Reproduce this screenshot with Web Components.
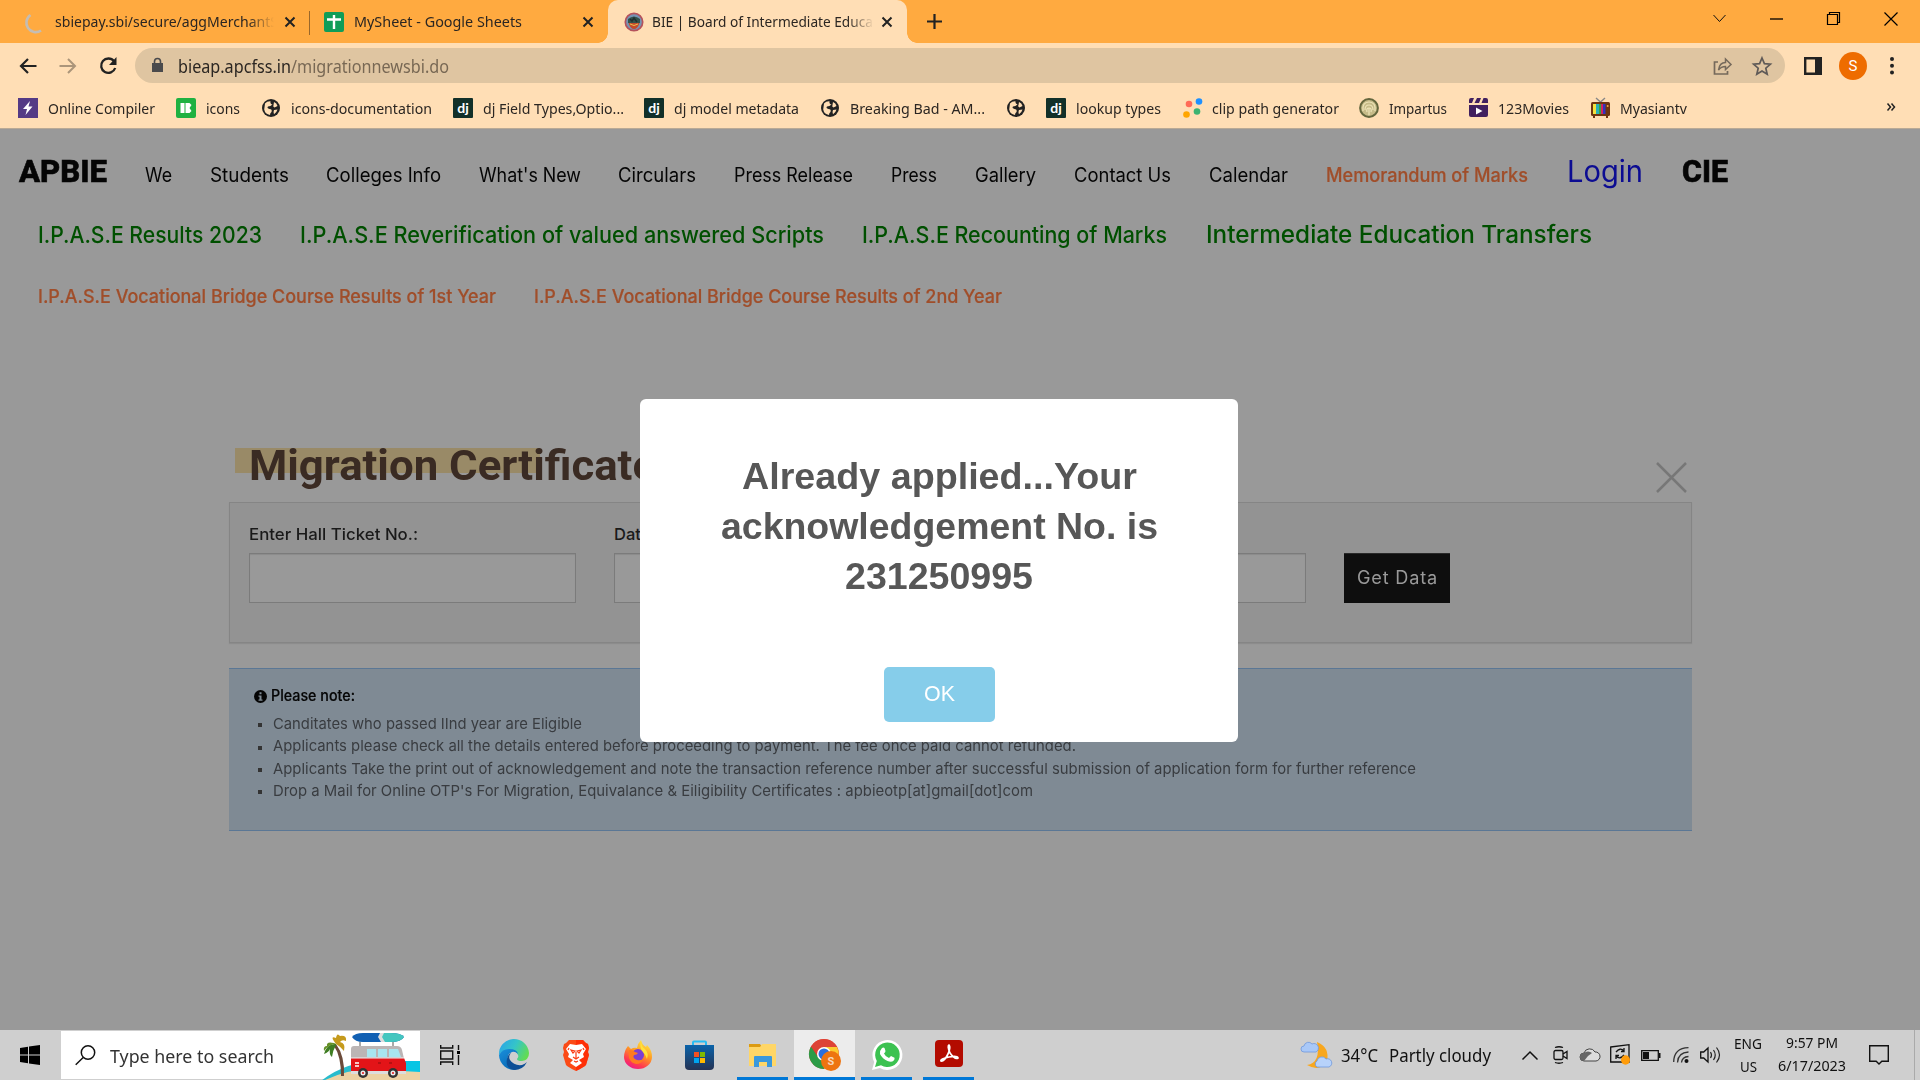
<!DOCTYPE html>
<html lang="en">
<head>
<meta charset="utf-8">
<title>BIE | Board of Intermediate Education</title>
<style>
html,body{margin:0;padding:0}
body{width:1920px;height:1080px;overflow:hidden;background:#999;font-family:"Noto Sans",sans-serif}
</style>
</head>
<body>
<desktop-screen></desktop-screen>
<script>
// Registers a custom element whose shadow root holds the given styles and markup.
const define = (name, css, html) => customElements.define(name, class extends HTMLElement {
  constructor() {
    super();
    const t = document.createElement('template');
    t.innerHTML = `<style>:host{display:block;box-sizing:border-box}svg{display:block;overflow:visible}.row{display:flex;height:100%}.row>div{flex:none;display:flex;align-items:center}${css}</style>${html}`;
    this.attachShadow({mode: 'open'}).appendChild(t.content.cloneNode(true));
  }
});

// A single line of text condensed or widened to a given width.
customElements.define('fit-text', class extends HTMLElement {
  constructor() {
    super();
    this.attachShadow({mode: 'open'}).innerHTML = '<style>:host{display:block;flex:none;white-space:nowrap}span{display:inline-block;transform-origin:0 50%}</style><span><slot></slot></span>';
  }
  connectedCallback() {
    const w = +this.getAttribute('w'), s = this.shadowRoot.querySelector('span');
    this.style.width = w + 'px';
    const n = s.getBoundingClientRect().width;
    if (n) s.style.transform = `scaleX(${w / n})`;
  }
});

// Lays items [x, width, markup, dy] along one flex row.
const row = items => {
  let p = 0;
  return '<div class="row">' + items.map(([x, w, h, dy]) => {
    const m = x - p; p = x + w;
    return `<div style="margin-left:${m}px;width:${w}px;${dy ? `margin-top:${dy}px;margin-bottom:${-dy}px` : ''}">${h}</div>`;
  }).join('') + '</div>';
};
const T = (x, w, text, cls = '', dy = 0) => [x, w, `<fit-text w="${w}" class="${cls}">${text}</fit-text>`, dy];
const I = (x, w, h, inner, dy = 0, vb) => [x, w, `<svg width="${w}" height="${h}" viewBox="${vb || `0 0 ${w} ${h}`}" fill="none">${inner}</svg>`, dy];

/* ---------- tab strip ---------- */
const X = '<path d="M1.5 1.5l9 9M10.5 1.5l-9 9" stroke="#222" stroke-width="2"/>';
define('tab-strip', `:host{height:43px;background:#ffaa40;font-size:15px;color:#2b2622}
.clip{overflow:hidden;width:219px;-webkit-mask:linear-gradient(90deg,#000 88%,transparent);mask:linear-gradient(90deg,#000 88%,transparent)}
.tab{position:relative;background:#ffdeb5;border-radius:10px 10px 0 0;height:43px;width:299px}
.tab:before,.tab:after{content:"";position:absolute;bottom:0;width:10px;height:10px}
.tab:before{left:-10px;background:radial-gradient(circle at 0 0,transparent 9.5px,#ffdeb5 10px)}
.tab:after{right:-10px;background:radial-gradient(circle at 100% 0,transparent 9.5px,#ffdeb5 10px)}`,
row([
 I(25,18,20,'<path d="M5.500 2A9 9 0 0 0 16 17.500" stroke="#c4bdb4" stroke-width="2.600"/>',1),
 [55,219,'<div class="clip"><fit-text w="223">sbiepay.sbi/secure/aggMerchantS</fit-text></div>',-1],
 I(284,12,12,X),
 I(309,1,24,'<path d="M.5 0v24" stroke="#99672a"/>',1),
 I(324,20,20,'<rect width="20" height="20" rx="2" fill="#0f9d58"/><path d="M10 3v14M3 7.500h14" stroke="#fff" stroke-width="2.400"/>',0),
 T(354,168,'MySheet - Google Sheets','',-1),
 I(582,12,12,X),
 [608,299,'<div class="tab">'+row([
   I(16,20,20,'<circle cx="10" cy="10" r="8.700" fill="#7694b4" stroke="#b4525c" stroke-width="1.700"/><path d="M4 7q6-5 12 0v4H4z" fill="#33524b"/><path d="M4.500 11h11q-2 6-5.500 6t-5.500-6z" fill="#c24a2c"/><path d="M6 12q4 3 8 0" stroke="#edc14c"/><path d="M6 7l2 2 2-3 3 4" stroke="#1f3031" stroke-width="1.500"/>'),
   [44,222,'<div class="clip" style="width:222px"><fit-text w="221">BIE | Board of Intermediate Educa</fit-text></div>',-1],
   I(273,12,12,X)
 ])+'</div>'],
 I(927,15,15,'<path d="M7.500 0v15M0 7.500h15" stroke="#222" stroke-width="2.200"/>'),
 I(1713,13,9,'<path d="M.5 1l6 6.500 6-6.500" stroke="#111" stroke-width="1"/>',-3),
 I(1770,13,2,'<path d="M0 1h13" stroke="#000" stroke-width="1.300"/>',-3),
 I(1827,13,13,'<path d="M.5 2.500h10v10H.5zM2.500 2.500v-2h10v10h-2" stroke="#000" stroke-width="1.200"/>',-3),
 I(1884,14,14,'<path d="M.5.5l13 13M13.500.5l-13 13" stroke="#000" stroke-width="1.200"/>',-3)
]));

/* ---------- address bar ---------- */
define('address-bar', `:host{height:45px;background:#ffdeb5;padding:0}
.omni{background:#dfc5a1;border-radius:18px;height:35px;width:1650px}
.url{font-size:18px;color:#786854}.url b{font-weight:400;color:#2b2622}
.av{width:28px;height:28px;border-radius:50%;background:#ee6c00;color:#fff;font:15px/28px Roboto,sans-serif;text-align:center}`,
row([
 I(19,18,16,'<path d="M17.500 8H2M9 1L2 8l7 7" stroke="#222" stroke-width="2.200"/>'),
 I(59,18,16,'<path d="M.5 8H16M9 1l7 7-7 7" stroke="#ab957a" stroke-width="2"/>'),
 I(99,18,18,'<path d="M15 4.200A7.200 7.200 0 1 0 16.200 11" stroke="#222" stroke-width="2.300"/><path d="M17.500 0v8H10z" fill="#222"/>'),
 [135,1650,'<div class="omni">'+row([
   I(17,11,14,'<path d="M0 5h11v9H0z" fill="#4a4a4c"/><path d="M2.500 5V3.500a3 3 0 0 1 6 0V5" stroke="#4a4a4c" stroke-width="1.600"/>',-1),
   T(43,271,'<b>bieap.apcfss.in</b>/migrationnewsbi.do','url'),
   I(1578,19,18,'<path d="M5 5H1.500v12h13v-3" stroke="#75695b" stroke-width="1.700"/><path d="M5.500 13q1-7.500 7-7.500V2l5.500 5.500-5.500 5V9.500q-4.500 0-7 3.500z" stroke="#75695b" stroke-width="1.500"/>',0),
   I(1618,18,18,'<path d="M9 1l2.400 5.700 6 .5-4.600 4 1.400 6L9 14l-5.200 3.200 1.400-6-4.600-4 6-.5z" stroke="#5f5a57" stroke-width="1.700"/>')
 ])+'</div>'],
 I(1804,18,18,'<path d="M1.200 1.200h15.600v15.600H1.200z" stroke="#222" stroke-width="2.400"/><path d="M11 1h6v16h-6z" fill="#222"/>'),
 [1839,28,'<div class="av">S</div>'],
 I(1890,4,18,'<circle cx="2" cy="2" r="2" fill="#222"/><circle cx="2" cy="8.700" r="2" fill="#222"/><circle cx="2" cy="15.500" r="2" fill="#222"/>')
]));

/* ---------- bookmarks ---------- */
const dj = x => I(x,20,20,'<rect width="20" height="20" rx="1" fill="#123029"/><text x="10" y="14.500" text-anchor="middle" font-family="Lato,sans-serif" font-weight="700" font-size="14" fill="#fff">dj</text>');
const globe = x => I(x,18,18,'<circle cx="9" cy="9" r="9" fill="#222"/><path d="M3 4.500Q5 2 8.500 2.200 8 5 10.500 5.500 8.500 7.500 6 7.500 4.500 9 7.500 10q3 0 2 3-1.500 1-1.500 3Q3 15 2.200 10.500zM12 3q2.800 1.200 3.500 4l-3 1.500q-2-1-1-2.500zM12 11l3.500-.5q-1 3.500-3.500 4.700-1-2 0-4.200z" fill="#ffdeb5"/>');
define('bookmarks-bar', `:host{height:41px;background:#ffdeb5;border-bottom:1px solid #b9aa96;font-size:15px;color:#2b2622}`,
row([
 I(18,20,20,'<rect width="20" height="20" fill="#543a85"/><path d="M12 3l-7 8h4l-1.500 6 7-8.500h-4z" fill="#fff"/>'),
 T(48,107,'Online Compiler'),
 I(176,20,20,'<rect width="20" height="20" rx="2" fill="#1fb141"/><path d="M4.500 5h4v10h-4zM9.500 5h4l2 2-2 3 2 3-2 2h-4z" fill="#fff"/>'),
 T(206,34,'icons'), globe(262), T(291,141,'icons-documentation'),
 dj(453), T(483,141,'dj Field Types,Optio...'),
 dj(644), T(674,125,'dj model metadata'),
 globe(821), T(850,135,'Breaking Bad - AM...'), globe(1007),
 dj(1046), T(1076,85,'lookup types'),
 I(1183,20,20,'<circle cx="6" cy="6" r="3.300" fill="#ff6b57"/><circle cx="16" cy="3.500" r="3.300" fill="#1e90ff"/><circle cx="14" cy="13.500" r="3.300" fill="#3cb371"/><circle cx="3.500" cy="16.500" r="3.300" fill="#ffa500"/>'),
 T(1212,127,'clip path generator'),
 I(1359,20,20,'<circle cx="10" cy="10" r="8.900" fill="#c6bb88" stroke="#64663d" stroke-width="2"/><path d="M10 17v-7M4 13q-1-9 6-9t6 9M6 12q0-5 4-5t4 5M8 14q-1-4 2-4t2 4" stroke="#eee4b8" stroke-width="1.200"/>'),
 T(1389,58,'Impartus'),
 I(1469,20,20,'<path d="M0 7h19v10q0 2-2 2H2q-2 0-2-2z" fill="#41205f"/><path d="M2 0h3L3 5H0V2q0-2 2-2zM8 0h4l-2 5H5.500zM14.500 0H17q2 0 2 2v3h-6.500z" fill="#41205f"/><path d="M7 9.500v7l6.500-3.500z" fill="#fff"/>'),
 T(1498,71,'123Movies'),
 I(1591,19,20,'<path d="M5 0l4.500 4L14 0" stroke="#888" stroke-width="1.400"/><rect y="4" width="19" height="14" rx="1.500" fill="#6e3510"/><path d="M2 6h3v10H2z" fill="#f3e33d"/><path d="M5 6h3v10H5z" fill="#29b0b8"/><path d="M8 6h2v10H8z" fill="#38a33e"/><path d="M10 6h2v10h-2z" fill="#d3245e"/><path d="M12 6h2.500v10H12z" fill="#3333bd"/><path d="M3 18v2M16 18v2" stroke="#6e3510" stroke-width="2"/><circle cx="16.700" cy="8" r="1" fill="#eda24f"/>'),
 T(1620,67,'Myasiantv'),
 I(1887,8,8,'<path d="M.5.5L3.500 4 .5 7.500M4.500.5L7.500 4l-3 3.500" stroke="#222" stroke-width="1.500"/>',-1)
]));

/* ---------- site navigation ---------- */
define('site-nav', `:host{font-family:Inter,sans-serif;color:#050505;padding-top:19px}
.l{height:46px}.l .row>div{align-items:baseline}.l .row{align-items:baseline}
.l2{margin-top:17px;height:46px;color:#005000}.l3{margin-top:17px;height:46px;color:#a04e2a}
fit-text{font-size:19.500px;line-height:46px}
.brand{font:800 31px/46px Roboto,Inter,sans-serif;-webkit-text-stroke:.6px #050505}
.login{font-size:30px;color:#0c0c92}
.mem{font-weight:500;color:#a04e2a;-webkit-text-stroke:.2px}
.g{font-size:23px;font-weight:500}.g2{font-size:24.500px;font-weight:500}.o{font-size:18.700px;font-weight:500;-webkit-text-stroke:.2px}`,
'<div class="l">'+row([
 T(19,88,'APBIE','brand'),T(145,27,'We'),T(210,79,'Students'),T(326,115,'Colleges Info'),T(479,102,"What's New"),T(618,78,'Circulars'),T(734,119,'Press Release'),
 T(891,46,'Press'),T(975,61,'Gallery'),T(1074,97,'Contact Us'),T(1209,79,'Calendar'),T(1326,202,'Memorandum of Marks','mem'),T(1567,76,'Login','login'),T(1682,46,'CIE','brand')
])+'</div><div class="l l2">'+row([
 T(38,224,'I.P.A.S.E Results 2023','g'),T(300,524,'I.P.A.S.E Reverification of valued answered Scripts','g'),T(862,305,'I.P.A.S.E Recounting of Marks','g'),T(1206,386,'Intermediate Education Transfers','g2')
])+'</div><div class="l l3">'+row([
 T(38,458,'I.P.A.S.E Vocational Bridge Course Results of 1st Year','o'),T(534,468,'I.P.A.S.E Vocational Bridge Course Results of 2nd Year','o')
])+'</div>');

/* ---------- migration form ---------- */
define('text-field', `:host{width:327px;font:500 16.500px/24px Inter,sans-serif;color:#1a1a1a}
.box{box-sizing:border-box;height:50px;margin-top:7px;border:1px solid #7b7b7b;background:#999;box-shadow:inset 0 1px 1px #8b8b8b}
label{display:block;height:24px;white-space:nowrap}`,
'<label><slot></slot></label><div class="box"></div>');
define('migration-form', `:host{margin:0 228px 0 229px}
header{display:flex;justify-content:space-between;height:62px}
.t{background:linear-gradient(#998a67,#998a67) 0 8px/305px 25px no-repeat;margin-left:6px;padding-left:14px;font:700 43px/50px Roboto,sans-serif;color:#3a2b23;height:62px}
.x{margin:22px 5px 0 0}
.panel{box-sizing:border-box;height:141px;border:1px solid #858585;background:#939393;padding:19px 19px 0;display:flex;gap:38px;box-shadow:0 1px 1px #8c8c8c}
button{box-sizing:border-box;margin:31px 0 0;padding:0;width:106px;height:50px;border:0;border-top:1px solid #292929;background:#0e0e0e;color:#999;font:400 18px/48px Inter,sans-serif;display:flex;justify-content:center;letter-spacing:.8px}`,
`<header><div class="t"><fit-text w="407">Migration Certificate</fit-text></div><svg class="x" width="31" height="31"><path d="M1 1l29 29M30 1L1 30" stroke="#777" stroke-width="2.500"/></svg></header>
<div class="panel"><text-field><fit-text w="169">Enter Hall Ticket No.:</fit-text></text-field><text-field>Date of Birth:</text-field><text-field></text-field><button><fit-text w="81">Get Data</fit-text></button></div>`);

/* ---------- notice ---------- */
define('notice-box', `:host{margin:25px 228px 0 229px;height:163px;background:#7f8a94;border:solid #5b7795;border-width:1px 0;padding:15px 0 0 25px;font:15px/22.400px Inter,sans-serif;color:#393c40}
header{display:flex;gap:4px;align-items:center;color:#050505;font-weight:500;font-size:15.500px;height:24px;margin-bottom:5px;-webkit-text-stroke:.2px}
ul{margin:0;padding:0;list-style:none}li{display:flex;align-items:center;height:22.400px}li:before{content:"";width:4px;height:4px;background:#333;margin:2px 11px 0 4px}`,
`<header><svg width="13" height="13"><circle cx="6.500" cy="6.500" r="6.500" fill="#050505"/><path d="M5.500 2.300h2v2h-2zM4.500 5.500h3v4h1v1.300h-4V9.500h1V6.700h-1z" fill="#7f8a94"/></svg><fit-text w="84">Please note:</fit-text></header>
<ul><li><fit-text w="309">Canditates who passed IInd year are Eligible</fit-text></li>
<li><fit-text w="803">Applicants please check all the details entered before proceeding to payment. The fee once paid cannot refunded.</fit-text></li>
<li><fit-text w="1143">Applicants Take the print out of acknowledgement and note the transaction reference number after successful submission of application form for further reference</fit-text></li>
<li><fit-text w="760">Drop a Mail for Online OTP's For Migration, Equivalance &amp; Eiligibility Certificates : apbieotp[at]gmail[dot]com</fit-text></li></ul>`);

/* ---------- alert ---------- */
define('alert-modal', `:host{width:598px;height:343px;background:#fff;border-radius:6px;display:flex;flex-direction:column;align-items:center;padding-top:52px;font:700 37.500px/50px "Liberation Sans",sans-serif;color:#575757}
button{margin:66px 0 0;width:111px;height:55px;border:0;border-radius:5px;background:#86cdea;color:#fff;font:21.500px/55px "Liberation Sans",sans-serif;padding:0;display:flex;justify-content:center}`,
`<fit-text w="395">Already applied...Your</fit-text><fit-text w="437">acknowledgement No. is</fit-text><fit-text w="188">231250995</fit-text><button><fit-text w="31">OK</fit-text></button>`);

/* ---------- taskbar ---------- */
const van = `<path d="M0 49Q25 29 60 29h39v20z" fill="#28bccd"/><path d="M60 29h39v11H50z" fill="#08c5e4"/><path d="M2 49q30-15 60-11l37 2v9z" fill="#ecd2a4"/>
<path d="M15 12q9 12 8 32h-3q0-20-7-30z" fill="#6b4a3a"/><path d="M15 12Q6 11 3 22q5-2 6-5-1 6 2 8 1-7 4-12z" fill="#3f7d23"/><path d="M15 12Q8 3 15 6q1-6 4-2 7-1 6 5-4-2-6 1 6 1 4 9-3-4-8-7z" fill="#c59a1c"/><path d="M13 11Q5 9 6 14q-4 0-3 5 5-7 12-7z" fill="#669128"/>
<path d="M31 5Q34 1 42 1h28q10 0 13 4-3 5-13 5H42q-8 0-11-5z" fill="#1160b3"/><path d="M62 1h8q10 0 13 4-3 5-13 5h-8l-3-5z" fill="#43c6bf"/><path d="M59 1h4l-2 4 3 5h-4l-3-5z" fill="#ddd"/>
<path d="M39 10v4M72 10v4" stroke="#555"/><path d="M33 14h43q4 0 5 4l3 13H30V17q0-3 3-3z" fill="#bbb5b5"/><path d="M46 17h9v8h-9zM57 17h9v8h-9zM68 17h9l3 8H68z" fill="#a8e6ef"/><path d="M30 26h53l2 5v9H30z" fill="#e31418"/><path d="M30 39h55v3H30z" fill="#ddd"/><path d="M30 26h53" stroke="#eee"/><path d="M34 31h4M34 34h4" stroke="#fff" stroke-width="1.500"/><path d="M57 31h3M68 31h3" stroke="#8b0c0c"/>
<circle cx="42" cy="41" r="5" fill="#333"/><circle cx="42" cy="41" r="2.500" fill="#eee"/><circle cx="42" cy="41" r="1" fill="#d11"/><circle cx="72" cy="41" r="5" fill="#333"/><circle cx="72" cy="41" r="2.500" fill="#eee"/><circle cx="72" cy="41" r="1" fill="#d11"/>`;
const edge = `<defs><linearGradient id="e1" x1="0" y1=".2" x2="1" y2=".6"><stop stop-color="#2aa5e8"/><stop offset=".5" stop-color="#35c5c8"/><stop offset="1" stop-color="#63dc50"/></linearGradient><linearGradient id="e2" x1="0" y1="0" x2=".6" y2="1"><stop stop-color="#1a90dc"/><stop offset="1" stop-color="#0868b4"/></linearGradient></defs>
<path d="M0 15A15 15 0 0 1 30 13q0 7-7 8-5 0-5-2 2-2 1-4-2-5-9-5Q3 10 0 15z" fill="url(#e1)"/><path d="M0 15Q3 9 10 9q8 0 9 5-3-3-6-2-7 3-3 11 3 5 8 6.500A15 15 0 0 1 0 15z" fill="url(#e2)"/><path d="M12 13q-3 3-1 7 4 6 12 5 3-1 5-3-4 8-13 8Q6 28 8 19q1-5 4-6z" fill="#0d4f96"/>`;
const brave = `<path d="M6 0h14l3 3 2 1 1 4-1 4 1 3-3 10q-2 2-10 6Q5 27 3 25L0 15l1-3-1-4 1-4 2-1z" fill="#fb4a16"/><path d="M13 0h7l3 3 2 1 1 4-1 4 1 3-3 10q-2 2-10 6z" fill="#ff2100" opacity=".65"/><path d="M7 4l6 1 6-1 4 5-3 5 1 3-5 3 3 3-6 4-6-4 3-3-5-3 1-3-3-5z" fill="#fff"/><path d="M8 10l4 1-2 2zM18 10l-4 1 2 2zM13 12v6M10 17l3 2 3-2M11 21l2 1 2-1M6 8l-1 2M20 8l1 2" stroke="#fb3a12" stroke-width="1.200" fill="none"/>`;
const fox = `<defs><linearGradient id="f1" x1=".8" y1="0" x2=".3" y2="1"><stop stop-color="#fff14a"/><stop offset=".45" stop-color="#ff9a22"/><stop offset=".8" stop-color="#ff3a50"/><stop offset="1" stop-color="#ec1b8a"/></linearGradient></defs>
<path d="M4 6l3 3q3-2 6-1 1-5 4-8 1 5 5 7l1-2q5 5 5 12a14 12 0 0 1-28 0q0-6 4-11z" fill="url(#f1)"/><circle cx="14" cy="15" r="6" fill="#7c3fd2"/><path d="M5 10q4 0 6 2l3 1q-1 2-4 2-2 3 3 5 5 1 7-2-2 6-8 6-9-2-7-14z" fill="#ff7a20"/><path d="M17 1q0 5 4 8 4 4 2 10-1-4-4-7-4-4-2-11z" fill="#ffe23c"/>`;
const store = `<defs><linearGradient id="s1" x1="0" y1="0" x2="0" y2="1"><stop stop-color="#0a63aa"/><stop offset="1" stop-color="#253354"/></linearGradient></defs><path d="M8 6V2.500Q8 1.500 9 1.500h11q1 0 1 1V6" stroke="#26bdf4" stroke-width="2"/><path d="M0 5h29v21q0 4-4 4H4q-4 0-4-4z" fill="url(#s1)"/><path d="M9 12h5v5H9z" fill="#f25022"/><path d="M15 12h5v5h-5z" fill="#7fba00"/><path d="M9 18h5v5H9z" fill="#00a4ef"/><path d="M15 18h5v5h-5z" fill="#ffb900"/>`;
const folder = `<path d="M0 1h11l2 3h14v6H0z" fill="#dc9b12"/><path d="M13 1h14v4H11z" fill="#ffd667"/><path d="M0 4h11l2-2h14v21H0z" fill="#ffd667"/><path d="M5 24V14q0-1 1-1h16q1 0 1 1v10h-5v-5h-8v5z" fill="#3a98dd"/>`;
const chrome = `<circle cx="15" cy="15" r="15" fill="#e33b2e"/><path d="M2 7.500A15 15 0 0 0 15 30l7-11-7-4-6 3z" fill="#2b9b46"/><path d="M15 30A15 15 0 0 0 28 8H15l7 8z" fill="#fccb2f"/><path d="M2 7.500A15 15 0 0 1 28 8H15q-5 0-7 6z" fill="#dd4336"/><circle cx="15" cy="15" r="7" fill="#fff"/><circle cx="15" cy="15" r="5.500" fill="#2c6fdd"/><circle cx="22" cy="22" r="10" fill="#ee7410"/><text x="22" y="26" font-family="Roboto,sans-serif" font-size="11" font-weight="700" fill="#f6d7bd" text-anchor="middle">S</text>`;
const wa = `<path d="M0 30l2.200-8A15 15 0 1 1 8 28z" fill="#fff"/><path d="M3 27l1.800-6A12.300 12.300 0 1 1 9 25.300z" fill="#3cc251"/><path d="M10 8q1.500-1 2.500 0l1 3q0 1-1.500 2.500 1.500 3.500 5 4.500l2-2 3.500 1.700q.5 1.500-1 3-2 2-6 .3-5-2-7.500-7Q7.500 10.500 10 8z" fill="#fff"/>`;
const pdf = `<rect width="28" height="27" rx="4" fill="#b30b00"/><path d="M6 21q-1-2 8-4 9-1.500 9 1-3 2-8-5Q12 6 14 5q2 2-1 9-4 8-7 7z" stroke="#fff" stroke-width="1.700"/>`;
const weather = `<path d="M16 2q13 5 10 20-8 10-20 3 14-2 10-23z" fill="#f8a71e"/><path d="M3 12a3 3 0 0 1 0-6 4.500 4.500 0 0 1 8-2 4 4 0 0 1 4 8z" fill="#a9c8f7" stroke="#6f98dd" stroke-width=".8"/><path d="M16 27a3.500 3.500 0 0 1 0-6 5 5 0 0 1 9-2 4 4 0 0 1 3 8z" fill="#b7d2fa" stroke="#6f98dd" stroke-width=".8"/>`;
define('search-box', `:host{width:359px;height:48px;background:#fff;font-size:18.500px;color:#333}`,
row([I(14,21,20,'<circle cx="13" cy="7.500" r="6.700" stroke="#111" stroke-width="1.500"/><path d="M8.200 12.500L.7 19.700" stroke="#111" stroke-width="1.500"/>',0),T(49,164,'Type here to search'),I(260,99,49,van,1)]));
define('task-bar', `:host{height:50px;background:#cfcfcf;font-size:18px;color:#111}
.run{height:50px;box-sizing:border-box;border-bottom:3px solid #0078d7;width:100%;display:flex;align-items:center;justify-content:center;padding-top:3px}.act{background:#ececec}
.two{display:flex;flex-direction:column;align-items:center;font-size:14.500px;line-height:23px}`,
row([
 I(20,20,20,'<path d="M0 3l8-1.200V9.500H0zM9 1.600L20 0v9.500H9zM0 10.500h8v7.700L0 17zM9 10.500h11V20L9 18.400z" fill="#000"/>'),
 [61,359,'<search-box></search-box>'],
 I(440,20,20,'<path d="M.7 0v3h12V0M.7 20v-3h12v3M.7 6h12v8H.7zM18.500 0v5M18.500 10v10" stroke="#111" stroke-width="1.400"/><path d="M17 6h3v3h-3z" fill="#000"/>'),
 I(499,30,30,edge),I(563,26,30,brave),I(624,28,29,fox,-1),I(685,29,30,store),
 [737,51,`<div class="run"><svg width="27" height="24" fill="none">${folder}</svg></div>`],
 [794,61,`<div class="run act"><svg width="32" height="32" fill="none">${chrome}</svg></div>`],
 [861,51,`<div class="run"><svg width="30" height="30" fill="none">${wa}</svg></div>`],
 [923,51,`<div class="run" style="padding-top:0"><svg width="28" height="27" fill="none">${pdf}</svg></div>`],
 I(1301,30,28,weather,-1),
 T(1341,37,'34°C'),T(1389,102,'Partly cloudy'),
 I(1522,16,9,'<path d="M.5 8.500L8 1l7.500 7.500" stroke="#111" stroke-width="1.500"/>'),
 I(1553,15,18,'<rect x="1" y="4.500" width="9" height="9" rx="1.500" stroke="#111" stroke-width="1.300"/><path d="M10 8l4-2.500v7L10 10M2 1.500q4-1.500 8 0M2 16.500q4 1.500 8 0" stroke="#111" stroke-width="1.300"/>'),
 I(1580,20,13,'<path d="M4 13a4 4 0 0 1 0-8 6 6 0 0 1 11-1 4.500 4.500 0 0 1 1 9z" fill="#ddd" stroke="#444"/><path d="M4 13a4 4 0 0 1 0-8 6 6 0 0 1 8 0L8 8z" fill="#666"/>',-1),
 I(1610,20,20,'<path d="M.7 3L19 .7V18H.7z" stroke="#111" stroke-width="1.300"/><path d="M6 8q4-5 8-1M14 4v3.500h-3M14 11q-4 5-8 1M6 15v-3.500h3" stroke="#111" stroke-width="1.300"/><ellipse cx="15.500" cy="16" rx="4.500" ry="4.700" fill="#ff9c0a"/>',-1),
 I(1641,20,11,'<path d="M.7.7h16.600v9.600H.7z" stroke="#111" stroke-width="1.300"/><path d="M2 2h6v7H2zM18 3h1.500v5H18z" fill="#111"/>'),
 I(1673,16,16,'<path d="M.7 15Q1 1 15.500 .7M4.500 15.500Q5 5.500 15.500 5M8.500 15.500Q9 10 15.500 9.500" stroke="#333" stroke-width="1.300"/><circle cx="13.500" cy="14" r="2" fill="#111"/>'),
 I(1700,21,18,'<path d="M.7 6h3L8 2v14l-4.300-4h-3z" stroke="#111" stroke-width="1.300"/><path d="M10.500 6q2 3 0 6M13.500 4q3.500 5 0 10M16.500 1.500q6 7.500 0 15" stroke="#222" stroke-width="1.200"/>'),
 [1733,30,'<div class="two"><fit-text w="28">ENG</fit-text><fit-text w="17">US</fit-text></div>'],
 [1778,69,'<div class="two"><fit-text w="52">9:57 PM</fit-text><fit-text w="68">6/17/2023</fit-text></div>',-1],
 I(1869,20,20,'<path d="M.7.700h18.600v15.600h-6.500L10 19l-2.800-2.700H.7z" stroke="#111" stroke-width="1.400"/>'),
 I(1914,1,50,'<path d="M.5 0v50" stroke="#aaa"/>')
]).replace(/<div style="margin-left:(\d+)px;width:30px;"><div class="two"/, '<div style="margin-left:$1px;width:30px;justify-content:center"><div class="two"'));

define('desktop-screen', `:host{width:1920px;height:1080px;display:flex;flex-direction:column;position:relative;overflow:hidden}
main{flex:1;min-height:0;background:#999}site-nav{height:311px}
alert-modal{position:absolute;left:640px;top:399px}`,
`<tab-strip></tab-strip><address-bar></address-bar><bookmarks-bar></bookmarks-bar>
<main><site-nav></site-nav><migration-form></migration-form><notice-box></notice-box></main>
<task-bar></task-bar><alert-modal></alert-modal>`);
</script>
</body>
</html>
